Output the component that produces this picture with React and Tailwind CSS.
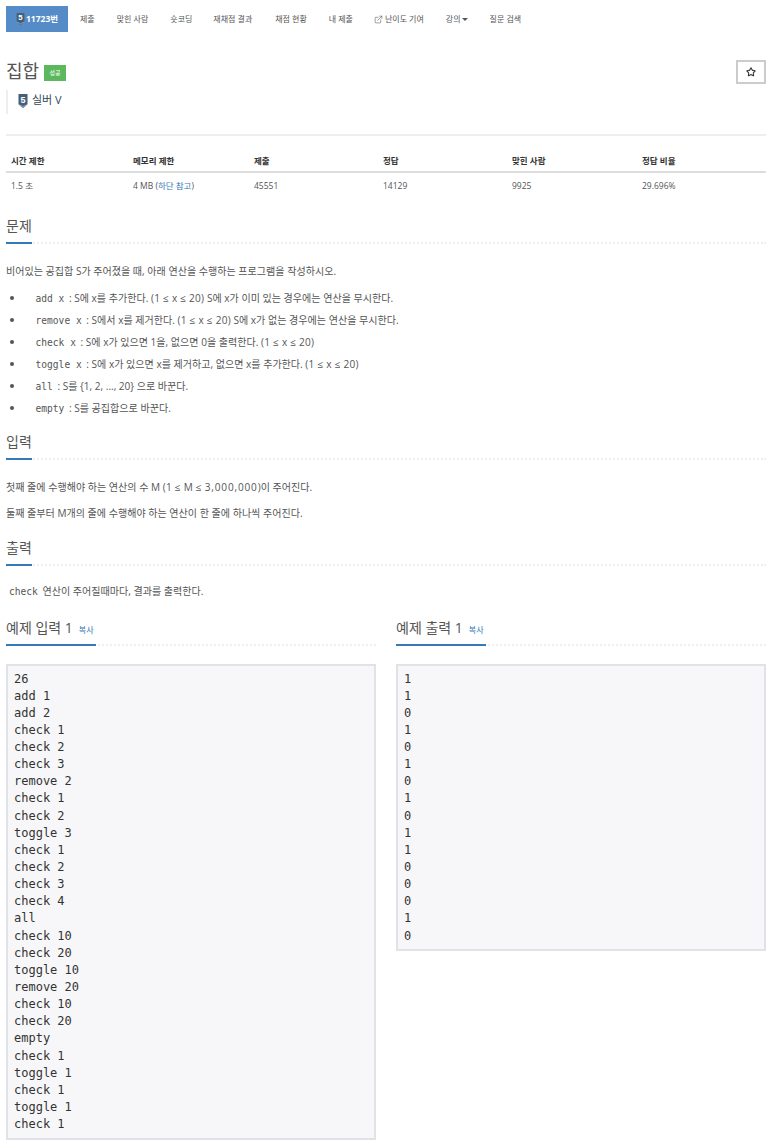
import React from "react";
import { ExternalLink, Star } from "lucide-react";

const sans = "font-['Open_Sans','Noto_Sans_CJK_KR',sans-serif]";
const mono = "font-['DejaVu_Sans_Mono','Noto_Sans_CJK_KR',monospace]";

function Tier({ className }) {
  return (
    <svg viewBox="0 0 20 28" className={className}>
      <path d="M1 0H19V21L10 28L1 21Z" fill="currentColor" />
      <path d="M1 21L10 25L19 21" fill="none" stroke="#fff" strokeWidth="1.2" opacity="0.7" />
      <text x="10" y="17" textAnchor="middle" fontSize="18" fontWeight="700" fill="#fff" fontFamily="Liberation Sans">5</text>
    </svg>
  );
}

const Code = ({ children }) => <code className={`${mono} px-[2px] text-[9.6px] text-[#555]`}>{children}</code>;
const Range = ({ children }) => <span className="tracking-[0.25px]">{children}</span>;

function SectionHead({ children, extra, className = "" }) {
  return (
    <div className={`border-b-2 border-dotted border-[#eee] ${className}`}>
      <div className="inline-block -mb-[2px] border-b-2 border-[#337ab7] pb-[6px] align-bottom">
        <span className="text-[14px] leading-[20px] text-[#555]">{children}</span>
        {extra}
      </div>
    </div>
  );
}

const navItems = [
  ["제출", "mr-[22px]"],
  ["맞힌 사람", "mr-[22px]"],
  ["숏코딩", "mr-[21px]"],
  ["재채점 결과", "mr-[23px]"],
  ["채점 현황", "mr-[22px]"],
  ["내 제출", "mr-[21px]"],
];

const input = `26
add 1
add 2
check 1
check 2
check 3
remove 2
check 1
check 2
toggle 3
check 1
check 2
check 3
check 4
all
check 10
check 20
toggle 10
remove 20
check 10
check 20
empty
check 1
toggle 1
check 1
toggle 1
check 1`;

const output = `1
1
0
1
0
1
0
1
0
1
1
0
0
0
1
0`;

const columns = [
  ["시간 제한", "1.5 초", "w-[122px]"],
  ["메모리 제한", null, "w-[121px]"],
  ["제출", "45551", "w-[129px]"],
  ["정답", "14129", "w-[129px]"],
  ["맞힌 사람", "9925", "w-[130px]"],
  ["정답 비율", "29.696%", "w-[129px]"],
];

const rules = [
  ["add x", <> : S에 x를 추가한다. <Range>(1 ≤ x ≤ 20)</Range> S에 x가 이미 있는 경우에는 연산을 무시한다.</>],
  ["remove x", <> : S에서 x를 제거한다. <Range>(1 ≤ x ≤ 20)</Range> S에 x가 없는 경우에는 연산을 무시한다.</>],
  ["check x", <> : S에 x가 있으면 1을, 없으면 0을 출력한다. <Range>(1 ≤ x ≤ 20)</Range></>],
  ["toggle x", <> : S에 x가 있으면 x를 제거하고, 없으면 x를 추가한다. <Range>(1 ≤ x ≤ 20)</Range></>],
  ["all", <> : S를 {"{1, 2, ..., 20}"} 으로 바꾼다.</>],
  ["empty", <> : S를 공집합으로 바꾼다.</>],
];

function Sample({ title, text }) {
  return (
    <div className="min-w-0">
      <SectionHead
        extra={<a className="ml-[6px] mr-[2px] text-[8px] text-[#337ab7]">복사</a>}
      >
        {title}
      </SectionHead>
      <pre className={`${mono} mt-[18px] border-2 border-[#e1e1e8] bg-[#f7f7f9] px-[6px] py-[4.5px] text-[12px] leading-[17.14px] text-[#333]`}>
        {text}
      </pre>
    </div>
  );
}

export default function App() {
  return (
    <div className={`${sans} h-[1146px] w-[772px] overflow-hidden bg-white px-[6px] pt-[6px] text-[10.06px] text-[#555]`}>
      <nav className="flex h-[26px] items-center text-[8px] text-[#555]">
        <a className="mr-[12px] flex h-[26px] w-[62px] items-center justify-center gap-[1px] bg-[#558bc6] font-bold text-white">
          <Tier className="h-[12px] w-[9px] text-[#435f7a]" />
          <span className="text-[8.5px]">11723번</span>
        </a>
        {navItems.map(([label, m]) => (
          <a key={label} className={m}>{label}</a>
        ))}
        <a className="mr-[22px] flex items-center gap-[2px]">
          <ExternalLink size={9} strokeWidth={1.5} />
          <span>난이도 기여</span>
        </a>
        <a className="mr-[22px] flex items-center gap-[1px]">
          <span>강의</span>
          <span className="mt-[1px] h-0 w-0 border-x-[3px] border-t-[3px] border-x-transparent border-t-[#555]" />
        </a>
        <a>질문 검색</a>
      </nav>

      <div className="mt-[28px] flex items-start justify-between">
        <div className="flex items-center gap-[5px]">
          <h1 className="text-[18px] leading-[22px] font-normal text-[#555]">집합</h1>
          <span className="mt-[4px] flex h-[16px] w-[22px] items-center justify-center bg-[#5cb85c] text-[6px] text-white">성공</span>
        </div>
        <button className="flex h-[24px] w-[30px] items-center justify-center border-2 border-[#ccc] bg-white text-[#333]">
          <Star size={10} strokeWidth={2.5} />
        </button>
      </div>

      <div className="mt-[6px] flex h-[24px] items-start gap-[4px] border-l-2 border-[#eee] pl-[10px] pt-[3px] text-[11px] leading-[14px] text-[#34495e]">
        <Tier className="mt-[1px] h-[14px] w-[10px] text-[#435f7a]" />
        <span>실버 V</span>
      </div>

      <div className="mt-[20px] border-t-2 border-[#eee]" />

      <table className="mt-[15px] w-full table-fixed border-collapse text-[8.5px]">
        <thead>
          <tr className="border-b-2 border-[#ddd]">
            {columns.map(([h, , w]) => (
              <th key={h} className={`${w} h-[21px] px-[5px] text-left font-bold text-[#333]`}>{h}</th>
            ))}
          </tr>
        </thead>
        <tbody>
          <tr>
            {columns.map(([h, v]) => (
              <td key={h} className="h-[26px] px-[5px] pt-[2px] text-[#555]">
                {v ?? (
                  <>4 MB (<a className="text-[#337ab7]">하단 참고</a>)</>
                )}
              </td>
            ))}
          </tr>
        </tbody>
      </table>

      <SectionHead className="mt-[18px]">문제</SectionHead>

      <p className="mt-[21px] leading-[13px]">비어있는 공집합 S가 주어졌을 때, 아래 연산을 수행하는 프로그램을 작성하시오.</p>

      <ul className="mt-[9px]">
        {rules.map(([c, t]) => (
          <li key={c} className="flex h-[22px] items-center leading-[22px]">
            <span className="ml-[4px] mr-[19.5px] h-[4px] w-[4px] shrink-0 rounded-full bg-[#555]" />
            <span><Code>{c}</Code>{t}</span>
          </li>
        ))}
      </ul>

      <SectionHead className="mt-[13px]">입력</SectionHead>
      <p className="mt-[21px] leading-[13px]">첫째 줄에 수행해야 하는 연산의 수 M <Range>(1 ≤ M ≤ </Range><span className="tracking-[0.85px]">3,000,000</span>)이 주어진다.</p>
      <p className="mt-[13px] leading-[13px]">둘째 줄부터 M개의 줄에 수행해야 하는 연산이 한 줄에 하나씩 주어진다.</p>

      <SectionHead className="mt-[18px]">출력</SectionHead>
      <p className="mt-[19px] pl-[1px] leading-[13px]"><Code>check</Code> 연산이 주어질때마다, 결과를 출력한다.</p>

      <div className="mt-[20px] grid grid-cols-2 items-start gap-x-[20px]">
        <Sample title="예제 입력 1" text={input} />
        <Sample title="예제 출력 1" text={output} />
      </div>
    </div>
  );
}
